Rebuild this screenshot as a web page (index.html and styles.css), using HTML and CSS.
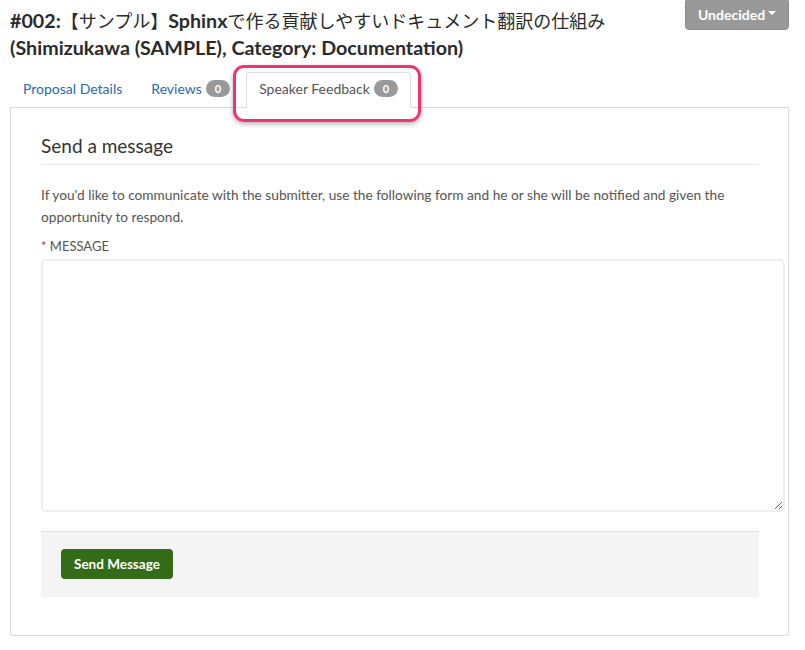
FILE: index.html
```html
<!DOCTYPE html>
<html lang="ja">
<head>
<meta charset="utf-8">
<title>Speaker Feedback</title>
<link rel="stylesheet" href="styles.css">
</head>
<body>
<div class="page">
  <div class="header">
    <h1 class="title">#002:<span class="ja">【サンプル】</span>Sphinx<span class="ja">で作る貢献しやすいドキュメント翻訳の仕組み</span><br>(Shimizukawa (SAMPLE), Category: Documentation)</h1>
    <button class="status">Undecided <span class="caret"></span></button>
  </div>
  <ul class="tabs">
    <li class="tab"><a href="#">Proposal Details</a></li>
    <li class="tab"><a href="#">Reviews<span class="badge">0</span></a></li>
    <li class="tab active"><a href="#">Speaker Feedback<span class="badge">0</span></a><span class="highlight"></span></li>
  </ul>
  <div class="panel">
    <h3 class="section-title">Send a message</h3>
    <p class="intro">If you'd like to communicate with the submitter, use the following form and he or she will be notified and given the opportunity to respond.</p>
    <label class="label"><span class="req">*</span> MESSAGE</label>
    <textarea class="message"></textarea>
    <div class="actions">
      <button class="send">Send Message</button>
    </div>
  </div>
</div>
</body>
</html>
```
FILE: styles.css
```css
html, body {
  margin: 0;
  padding: 0;
  background: #fff;
}
body {
  font-family: Lato, "Noto Sans CJK JP", sans-serif;
  color: #333;
}
.page {
  padding: 0 16px 0 10px;
}
.header {
  display: flex;
  justify-content: space-between;
  align-items: flex-start;
}
.title {
  margin: 7px 0 0 0;
  font-size: 19.7px;
  line-height: 27px;
  font-weight: 700;
  color: #2b2b2b;
}
.title .ja {
  font-family: "Noto Sans CJK JP", sans-serif;
  font-weight: 400;
  font-size: 18px;
}
.status {
  margin-top: -2px;
  width: 104px;
  height: 32px;
  background: #999;
  border: 1px solid #8c8c8c;
  border-radius: 4px;
  color: #fff;
  font-family: Lato, sans-serif;
  font-weight: 700;
  font-size: 14px;
  padding: 0 8px;
  display: flex;
  align-items: center;
  justify-content: center;
  gap: 3px;
}
.caret {
  display: inline-block;
  width: 0;
  height: 0;
  border-left: 4px solid transparent;
  border-right: 4px solid transparent;
  border-top: 4px solid #fff;
  margin-top: -2px;
}
.tabs {
  list-style: none;
  margin: 11px 0 0 0;
  padding: 0;
  display: flex;
  border-bottom: 1px solid #ddd;
}
.tab {
  position: relative;
  margin-right: 3px;
  margin-bottom: -1px;
}
.tab a {
  display: flex;
  align-items: center;
  box-sizing: border-box;
  height: 36px;
  padding: 0 12px 3px 12px;
  border: 1px solid transparent;
  border-radius: 4px 4px 0 0;
  font-size: 14px;
  color: #2a6ab3;
  text-decoration: none;
}
.tab.active a {
  color: #555;
  background: #fff;
  border-color: #ddd #ddd transparent #ddd;
}
.badge {
  display: inline-block;
  margin-left: 4px;
  background: #999;
  color: #fff;
  font-size: 11px;
  font-weight: 700;
  line-height: 17px;
  padding: 0 9px;
  border-radius: 9px;
}
.highlight {
  position: absolute;
  left: -13px;
  top: -7px;
  width: 182px;
  height: 51px;
  border: 3px solid #f2336d;
  border-radius: 11px;
  box-shadow: 0 2px 5px rgba(0, 0, 0, 0.3);
  pointer-events: none;
}
.panel {
  border: 1px solid #ddd;
  border-top: none;
  border-radius: 0 0 4px 4px;
  box-shadow: 0 1px 2px rgba(0, 0, 0, 0.08);
  padding: 27px 29px 38px 30px;
}
.section-title {
  margin: 0;
  padding-bottom: 7px;
  border-bottom: 1px solid #e5e5e5;
  font-size: 19px;
  line-height: 22px;
  font-weight: 400;
  color: #333;
}
.intro {
  margin: 19px 0 0 0;
  font-size: 13.7px;
  line-height: 22px;
  color: #555;
}
.label {
  display: block;
  margin-top: 9px;
  font-size: 13px;
  line-height: 18px;
  color: #555;
}
.req {
  color: #c0392b;
}
.message {
  display: block;
  box-sizing: border-box;
  margin-top: 4px;
  width: 744px;
  height: 253px;
  border: 2px solid #eee;
  border-radius: 5px;
  resize: vertical;
}
.actions {
  margin-top: 19px;
  background: #f4f4f4;
  border-top: 1px solid #e3e3e3;
  padding: 17px 20px 18px 20px;
}
.send {
  height: 30px;
  padding: 0 13px;
  background: #346b18;
  color: #fff;
  border: none;
  border-radius: 4px;
  font-family: Lato, sans-serif;
  font-weight: 700;
  font-size: 13.5px;
}
```
